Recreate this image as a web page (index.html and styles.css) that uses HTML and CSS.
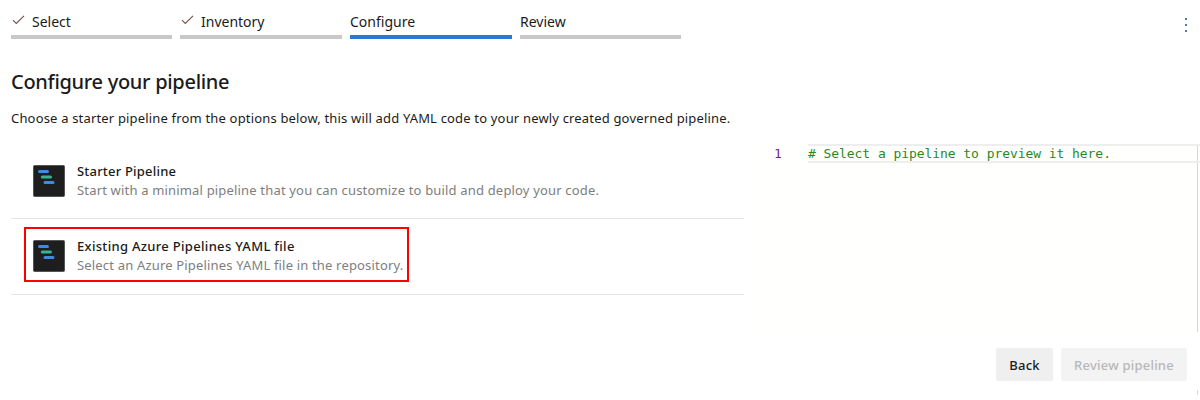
FILE: index.html
```html
<!DOCTYPE html>
<html lang="en">
<head>
<meta charset="utf-8">
<title>Configure your pipeline</title>
<link rel="stylesheet" href="styles.css">
</head>
<body>
<header class="topbar">
  <nav class="steps">
    <div class="step"><svg class="check" viewBox="0 0 13 10"><path d="M1 5.2 4.3 8.5 12 .8"/></svg><span>Select</span></div>
    <div class="step"><svg class="check" viewBox="0 0 13 10"><path d="M1 5.2 4.3 8.5 12 .8"/></svg><span>Inventory</span></div>
    <div class="step active"><span>Configure</span></div>
    <div class="step"><span>Review</span></div>
  </nav>
  <svg class="more" viewBox="0 0 2 14"><path d="M0 0h2v2H0zM0 6h2v2H0zM0 12h2v2H0z"/></svg>
</header>
<main class="main">
  <section class="options">
    <h1 class="title">Configure your pipeline</h1>
    <p class="intro">Choose a starter pipeline from the options below, this will add YAML code to your newly created governed pipeline.</p>
    <div class="option first">
      <div class="card">
        <svg class="icon" viewBox="0 0 32 32"><rect class="tile" x=".5" y=".5" width="31" height="31" rx="1"/><path class="blue" d="M6.5 6.5h8M12 17.5h8"/><path class="green" d="M9.3 12h8.2"/></svg>
        <div><div class="name short">Starter Pipeline</div><div class="desc">Start with a minimal pipeline that you can customize to build and deploy your code.</div></div>
      </div>
    </div>
    <div class="option">
      <div class="card highlighted">
        <svg class="icon" viewBox="0 0 32 32"><rect class="tile" x=".5" y=".5" width="31" height="31" rx="1"/><path class="blue" d="M6.5 6.5h8M12 17.5h8"/><path class="green" d="M9.3 12h8.2"/></svg>
        <div><div class="name">Existing Azure Pipelines YAML file</div><div class="desc">Select an Azure Pipelines YAML file in the repository.</div></div>
      </div>
    </div>
  </section>
  <section class="preview">
    <div class="editor">
      <div class="line-number">1</div>
      <div class="code-area"><div class="code">#&nbsp;Select a pipeline to preview it here.</div></div>
    </div>
    <footer class="actions">
      <button class="btn back">Back</button>
      <button class="btn review" disabled>Review pipeline</button>
    </footer>
    <div class="editor-end"></div>
  </section>
</main>
</body>
</html>
```

FILE: styles.css
```css
* { box-sizing: border-box; }
body { margin: 0; width: 1200px; height: 400px; overflow: hidden; background: #fff; color: #1b1b1b; font-family: "Noto Sans", sans-serif; }
.topbar { display: flex; justify-content: space-between; height: 39px; padding: 0 13px 0 11px; }
.steps { display: grid; grid-template-columns: 161px 162px 162px 161px; column-gap: 8px; }
.step { display: flex; height: 39px; padding-top: 12px; border-bottom: 4px solid #c8c8c8; font-size: 14px; line-height: 20px; white-space: nowrap; }
.step.active { border-color: #2b78d6; }
.check { width: 13px; height: 10px; margin: 3px 7px 0 1px; fill: none; stroke: #755044; stroke-width: 1.1; }
.more { width: 2px; height: 14px; margin-top: 18px; fill: #4a7fae; }
.main { display: flex; justify-content: space-between; height: 361px; }
.options { width: 744px; padding-left: 11px; white-space: nowrap; }
.title { margin: 30px 0 0; height: 27px; font-size: 20px; line-height: 26px; font-weight: 500; letter-spacing: -.3px; }
.intro { margin: 12px 0 0; height: 20px; font-size: 13px; line-height: 20px; letter-spacing: .174px; }
.option { height: 76px; padding: 8px 0 0 13px; border-bottom: 1px solid #e5e5e5; }
.option.first { height: 91px; padding-top: 24px; }
.card { display: flex; gap: 12px; width: 385px; height: 55px; padding: 8px 7px; border: 2px solid transparent; }
.highlighted { border-color: #f00; }
.icon { flex: none; width: 32px; height: 32px; margin-top: 3px; }
.tile { fill: #1e1e1e; stroke: #555; }
.blue, .green { fill: none; stroke-width: 3; stroke-linecap: round; }
.blue { stroke: #4189df; }
.green { stroke: #36b394; }
.name { height: 19px; font-size: 13px; line-height: 18px; font-weight: 500; letter-spacing: .31px; }
.name.short { letter-spacing: .2px; }
.desc { font-size: 13px; line-height: 18px; color: #7e7e7e; letter-spacing: .174px; }
.preview { width: 455px; padding-top: 105px; }
.editor { display: flex; height: 188px; background: linear-gradient(to right, #fffffe 453px, #fff 453px); font: 13px/16px "DejaVu Sans Mono", monospace; }
.line-number { width: 63px; padding: 2px 0 0 29px; color: #7b257d; }
.code-area { width: 390px; border-right: 1px solid #d8d8d8; }
.code { width: 392px; height: 19px; border-top: 2px solid #eee; border-bottom: 2px solid #eee; line-height: 16px; color: #2b8726; letter-spacing: -.06px; white-space: nowrap; }
.actions { display: flex; gap: 8px; height: 58px; padding: 16px 13px 9px 0; justify-content: flex-end; }
.btn { height: 33px; padding: 0; border: 0; border-radius: 2px; font: 500 13px "Noto Sans", sans-serif; letter-spacing: .22px; color: #1b1b1b; background: #efefef; white-space: nowrap; }
.back { width: 57px; }
.review { width: 126px; color: #b8b8b8; background: #f3f3f3; }
.editor-end { width: 453px; height: 5px; background: #fffffe; border-right: 1px solid #d8d8d8; }
```
